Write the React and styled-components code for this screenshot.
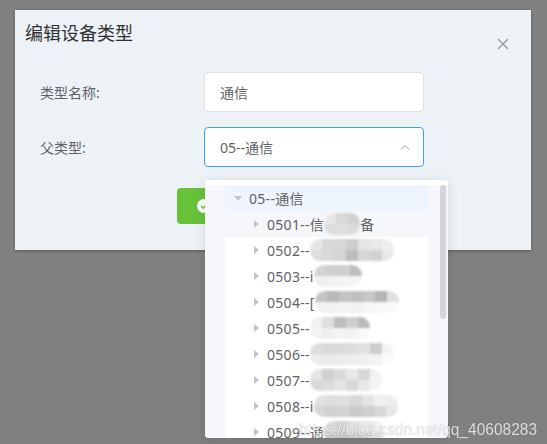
import styled, { createGlobalStyle } from "styled-components";

const GlobalStyle = createGlobalStyle`
  html, body {
    margin: 0;
    padding: 0;
    background: #808080;
    font-family: "Noto Sans", "Noto Sans CJK SC", sans-serif;
  }
  #root {
    min-height: 444px;
  }
`;

const Page = styled.div`
  position: relative;
  width: 547px;
  height: 444px;
  padding: 10px 0 0 15px;
  box-sizing: border-box;
  overflow: hidden;
`;

const Dialog = styled.div`
  width: 516px;
  height: 240px;
  background: #edf2f7;
  box-shadow: 0 1px 3px rgba(0, 0, 0, 0.3);
  box-sizing: border-box;
  display: flex;
  flex-direction: column;
`;

const Header = styled.div`
  display: flex;
  justify-content: space-between;
  align-items: flex-start;
  padding: 10px 22px 0 10px;
  height: 52px;
  box-sizing: border-box;
`;

const Title = styled.span`
  font-family: "Noto Sans CJK SC", sans-serif;
  font-size: 18px;
  line-height: 24px;
  color: #303133;
`;

const Close = styled.button`
  margin-top: 18px;
  padding: 0;
  border: none;
  background: none;
  width: 12px;
  height: 12px;
  display: flex;
`;

const Body = styled.div`
  padding: 10px 0 0 25px;
  display: flex;
  flex-direction: column;
  gap: 15px;
`;

const Row = styled.div`
  display: flex;
  align-items: center;
`;

const Label = styled.label`
  width: 164px;
  font-size: 14px;
  color: #606266;
`;

const Field = styled.div`
  position: relative;
  width: 220px;
  height: 40px;
  box-sizing: border-box;
  border: 1px solid ${(p) => (p.$focus ? "#409eff" : "#dcdfe6")};
  border-radius: 4px;
  background: #fff;
  display: flex;
  align-items: center;
  justify-content: space-between;
  padding: 0 13px 0 15px;
  font-size: 14px;
  color: #606266;
`;

const Footer = styled.div`
  padding: 6px 0 0 137px;
`;

const Button = styled.button`
  width: 98px;
  height: 36px;
  border: none;
  border-radius: 4px;
  background: #67c23a;
  color: #fff;
  font-size: 14px;
  font-family: inherit;
  display: flex;
  align-items: center;
  padding-left: 20px;
  gap: 5px;
`;

const Dropdown = styled.div`
  position: absolute;
  left: 205px;
  top: 180px;
  width: 243px;
  height: 258px;
  box-sizing: border-box;
  background: #fff;
  border-radius: 4px;
  box-shadow: 0 2px 12px rgba(0, 0, 0, 0.12);
  padding-top: 5px;
  overflow: hidden;
`;

const Scroller = styled.div`
  position: relative;
  height: 100%;
  background: #f5f7fa;
  padding-left: 20px;
`;

const Tree = styled.div`
  width: 203px;
  height: 100%;
  background: #fff;
  display: flex;
  flex-direction: column;
`;

const Node = styled.div`
  height: 26px;
  flex: none;
  display: flex;
  align-items: center;
  padding-left: ${(p) => (p.$level ? 29 : 9)}px;
  background: ${(p) => p.$bg || "transparent"};
  font-size: 14px;
  letter-spacing: 0.3px;
  color: #606266;
  white-space: nowrap;
`;

const Caret = styled.span`
  width: 0;
  height: 0;
  margin-right: ${(p) => (p.$open ? 7 : 8)}px;
  border-style: solid;
  ${(p) =>
    p.$open
      ? "border-width: 5px 4px 0 4px; border-color: #c0c4cc transparent transparent transparent;"
      : "border-width: 4px 0 4px 5px; border-color: transparent transparent transparent #c0c4cc;"}
`;

const Mosaic = styled.span`
  display: inline-grid;
  grid-auto-flow: column;
  grid-template-rows: repeat(2, 11px);
  border-radius: 10px;
  overflow: hidden;
  filter: blur(0.8px);
`;

const Cell = styled.span`
  width: 12px;
  height: 11px;
`;

const Thumb = styled.div`
  position: absolute;
  right: 2px;
  top: 0;
  width: 6px;
  height: 134px;
  border-radius: 3px;
  background: #d4d5d9;
`;

const Watermark = styled.div`
  position: absolute;
  right: 10px;
  bottom: 6px;
  font-family: "Liberation Sans", Arial, sans-serif;
  font-size: 15.5px;
  transform: scaleY(1.1);
  color: rgba(255, 255, 255, 0.8);
  text-shadow: 0 0 1px rgba(0, 0, 0, 0.35);
  white-space: nowrap;
`;

const nodes = [
  { code: "0501--", pre: "信", cells: ["e8e8ea", "dcdcde", "d8d8da", "e0e0e2", "d0d0d2", "dcdcde"], post: "备" },
  { code: "0502--", cells: ["e6e6e8", "dedee0", "d8d8da", "dadadc", "d6d6d8", "d4d4d6", "cdcdd0", "bdbdc0", "e4e4e4", "d8d8da", "e8e8ea", "d2d2d4", "eeeeee", "e8e8ea"] },
  { code: "0503--", pre: "i", cells: ["d4d4d6", "f0f0f0", "cfcfd1", "f2f2f2", "cfcfd1", "f4f4f4", "bebec0", "f6f6f6"] },
  { code: "0504--", pre: "[", cells: ["c4c4c6", "f0f0f0", "b8b8ba", "f2f2f2", "c4c4c6", "f4f4f4", "c0c0c2", "f2f2f2", "c8c8ca", "f6f6f6", "b6b6b8", "f8f8f8", "e0e0e2", "fafafa"] },
  { code: "0505--", cells: ["f0f0f0", "f4f4f4", "e0e0e2", "eeeeee", "bebec0", "f4f4f4", "cfcfd1", "f2f2f2", "bbbbbd", "f8f8f8"] },
  { code: "0506--", cells: ["dcdcde", "ececee", "d8d8da", "eaeaec", "dadadc", "ececee", "dcdcde", "eeeeee", "e2e2e4", "f0f0f0", "ccccce", "f2f2f2", "f4f4f4", "fafafa"] },
  { code: "0507--", cells: ["e4e4e6", "d8d8da", "d0d0d2", "dcdcde", "dadadc", "e4e4e6", "e8e8ea", "d8d8da", "d6d6d8", "e8e8ea", "f2f2f2", "f4f4f4"] },
  { code: "0508--", pre: "i", cells: ["e2e2e4", "d6d6d8", "dedee0", "d0d0d2", "e0e0e2", "d2d2d4", "d8d8da", "cacacc", "e4e4e6", "cfcfd1", "f0f0f0", "d6d6d8", "eeeeee", "e6e6e8"] },
  { code: "0509--", pre: "通", cells: ["dadadc", "c8c8ca", "d4d4d6", "c6c6c8", "e2e2e4", "cbcbcd", "e8e8ea", "d0d0d2", "eeeeee", "e0e0e2"] },
];

const App = () => (
  <Page>
    <GlobalStyle />
    <Dialog>
      <Header>
        <Title>编辑设备类型</Title>
        <Close aria-label="关闭">
          <svg width="12" height="12" viewBox="0 0 12 12">
            <path d="M1 1 L11 11 M11 1 L1 11" stroke="#909399" strokeWidth="1.2" />
          </svg>
        </Close>
      </Header>
      <Body>
        <Row>
          <Label>类型名称:</Label>
          <Field>通信</Field>
        </Row>
        <Row>
          <Label>父类型:</Label>
          <Field $focus>
            05--通信
            <svg width="10" height="6" viewBox="0 0 10 6">
              <path d="M1 5.5 L5 1.5 L9 5.5" fill="none" stroke="#c0c4cc" strokeWidth="1.2" />
            </svg>
          </Field>
        </Row>
        <Footer>
          <Button>
            <svg width="14" height="14" viewBox="0 0 14 14">
              <circle cx="7" cy="7" r="7" fill="#fff" />
              <path d="M4 7 L6.2 9.2 L10 5" fill="none" stroke="#67c23a" strokeWidth="1.4" />
            </svg>
            确定
          </Button>
        </Footer>
      </Body>
    </Dialog>

    <Dropdown>
      <Scroller>
        <Tree>
          <Node $bg="#eef5fe">
            <Caret $open />
            05--通信
          </Node>
          {nodes.map((n, i) => (
            <Node key={n.code} $level={1} $bg={i === 0 ? "#f5f7fa" : undefined}>
              <Caret />
              {n.code}
              {n.pre}
              <Mosaic>
                {n.cells.map((c, j) => (
                  <Cell key={j} style={{ background: "#" + c }} />
                ))}
              </Mosaic>
              {n.post}
            </Node>
          ))}
        </Tree>
        <Thumb />
      </Scroller>
    </Dropdown>

    <Watermark>https://blog.csdn.net/qq_40608283</Watermark>
  </Page>
);

export default App;
